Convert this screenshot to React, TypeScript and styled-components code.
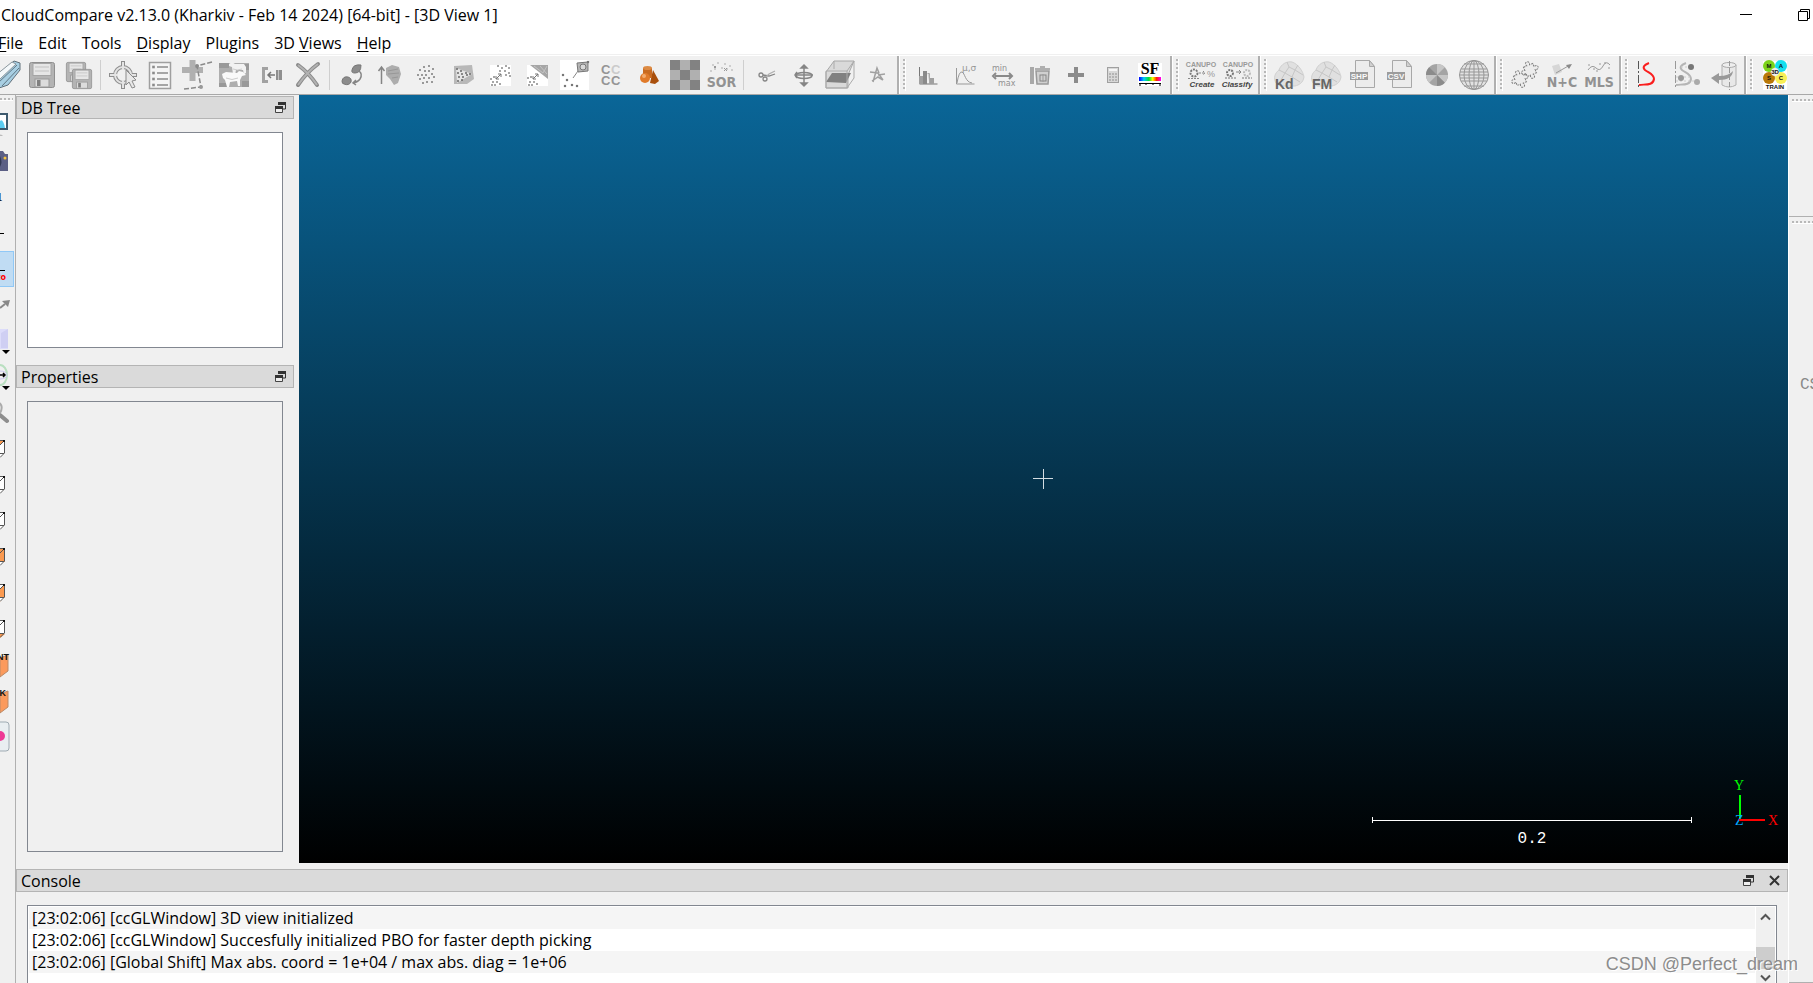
import React from 'react';
import styled, { createGlobalStyle } from 'styled-components';

const GlobalStyle = createGlobalStyle`
  * { box-sizing: border-box; }
  body { margin: 0; background: #f0f0f0; color: #000; font: 16px/20px "Open Sans", "Noto Sans", sans-serif; overflow: hidden; }
  button { font: inherit; color: inherit; background: none; border: 0; padding: 0; margin: 0; }
  ul { list-style: none; margin: 0; padding: 0; }
`;

/* ---------- window frame ---------- */

const Window = styled.div`
  position: relative;
  display: flex;
  flex-direction: column;
  height: 100vh;
  overflow: hidden;
`;

const TitleBar = styled.header`
  display: flex;
  justify-content: space-between;
  align-items: center;
  height: 29px;
  flex: none;
  padding: 0 3px 0 1px;
  background: #fff;
`;

const Title = styled.h1`
  margin: 0;
  font-size: 16px;
  line-height: 20px;
  font-weight: 400;
  white-space: nowrap;
`;

const WindowButtons = styled.div`
  display: flex;
  gap: 46px;
`;

const WindowButton = styled.button`
  display: flex;
  width: 12px;
  height: 12px;
`;

const MenuBar = styled.nav`
  display: flex;
  gap: 15px;
  height: 26px;
  flex: none;
  margin-left: -2px;
  padding-top: 4px;
  background: #fff;
  border-bottom: 1px solid #f0f0f0;
`;

const MenuButton = styled.button`
  height: 20px;
  line-height: 20px;
  white-space: nowrap;
  u { text-underline-offset: 2px; }
`;

/* ---------- top tool bar ---------- */

const ToolBar = styled.div`
  display: flex;
  flex: none;
  height: 40px;
  border-top: 1px solid #fff;
  border-bottom: 1px solid #a8a8a8;
  overflow: hidden;
`;

const ToolGroup = styled.div<{ $cut?: boolean }>`
  display: flex;
  flex: none;
  margin-left: ${(p) => (p.$cut ? '-14px' : '0')};
`;

const GroupEdge = styled.div`
  display: flex;
  align-items: center;
  flex: none;
  width: 14px;
  padding-left: 2px;
  &::before {
    content: '';
    align-self: stretch;
    width: 2px;
    margin-right: 3px;
    background: #b0b0b0;
    border-right: 1px solid #fff;
  }
`;

const VerticalGrip = styled.span`
  width: 3px;
  height: 32px;
  background: repeating-linear-gradient(to bottom, #b8b8b8 0 2px, transparent 2px 4px);
  border-right: 1px solid #fff;
`;

const HorizontalGrip = styled.div<{ $side?: 'left' | 'right' }>`
  height: 3px;
  flex: none;
  margin: ${(p) => (p.$side === 'right' ? '3px 0 0 3px' : '3px 2px 0 0')};
  background: repeating-linear-gradient(to right, #b8b8b8 0 2px, transparent 2px 4px);
  border-bottom: 1px solid #fff;
`;

const Separator = styled.span`
  display: flex;
  justify-content: center;
  width: 7px;
  padding: 4px 0;
  &::before { content: ''; width: 1px; background: #cfcfcf; }
`;

const ToolButton = styled.button`
  display: block;
  flex: none;
  width: 37px;
  height: 38px;
  svg { display: block; }
`;

/* ---------- body ---------- */

const Body = styled.div`
  display: flex;
  flex: 1;
  min-height: 0;
`;

const SideBar = styled.aside`
  display: flex;
  flex-direction: column;
  width: 16px;
  flex: none;
  overflow: hidden;
  border-right: 1px solid #b0b0b0;
`;

const SideButtons = styled.div`
  display: flex;
  flex-direction: column;
  padding-top: 6px;
`;

const SideButton = styled.button<{ $active?: boolean }>`
  display: block;
  height: 36px;
  width: ${(p) => (p.$active ? '14px' : '15px')};
  background: ${(p) => (p.$active ? '#c0dcf3' : 'none')};
  border: solid ${(p) => (p.$active ? '#90c8f6' : 'transparent')};
  border-width: 1px 1px 1px 0;
  svg { display: block; overflow: visible; }
`;

const Centre = styled.main`
  display: flex;
  flex-direction: column;
  flex: 1;
  min-width: 0;
`;

const Workspace = styled.div`
  display: flex;
  flex: 1;
  min-height: 0;
`;

const DockColumn = styled.div`
  display: flex;
  flex-direction: column;
  gap: 6px;
  width: 278px;
  flex: none;
  margin-right: 5px;
  padding-top: 1px;
`;

const Dock = styled.section<{ $height?: number }>`
  display: flex;
  flex-direction: column;
  min-height: 0;
  flex: ${(p) => (p.$height ? `0 0 ${p.$height}px` : '1')};
`;

const DockHeader = styled.div`
  display: flex;
  align-items: center;
  height: 23px;
  flex: none;
  padding: 0 7px 0 4px;
  background: #dadada;
  border: 1px solid #b4b4b4;
`;

const DockTitle = styled.h2`
  flex: 1;
  margin: 0;
  font-size: 16px;
  line-height: 20px;
  font-weight: 400;
`;

const HeaderButton = styled.button`
  display: flex;
  width: 11px;
  height: 11px;
  & + & { margin-left: 15px; }
`;

const DockPanel = styled.div<{ $fill: string }>`
  flex: 1;
  margin: 13px 11px 11px;
  border: 1px solid #828790;
  background: ${(p) => p.$fill};
`;

const Viewport = styled.div`
  position: relative;
  flex: 1;
  min-width: 0;
  background: linear-gradient(#0a6698, #000);
`;

const Crosshair = styled.svg`
  position: absolute;
  left: calc(50% - 11px);
  top: calc(50% - 11px);
`;

const ScaleBar = styled.div`
  position: absolute;
  right: 96px;
  bottom: 14px;
  width: 320px;
  color: #fff;
  text-align: center;
  font: 16px/20px "Liberation Mono", monospace;
  svg { display: block; width: 100%; margin-bottom: 6px; }
`;

const AxisTripod = styled.svg`
  position: absolute;
  right: 5px;
  bottom: 34px;
`;

/* ---------- console ---------- */

const Console = styled.section`
  flex: none;
  height: 114px;
  margin-top: 6px;
  overflow: hidden;
`;

const ConsoleBox = styled.div`
  display: flex;
  height: 84px;
  margin: 13px 11px 0;
  padding: 1px;
  background: #fff;
  border: 1px solid #828790;
  border-bottom: 0;
`;

const Log = styled.ul`
  flex: 1;
`;

const LogLine = styled.li`
  height: 22px;
  padding-left: 3px;
  line-height: 22px;
  white-space: nowrap;
  &:nth-child(odd) { background: #f5f5f5; }
`;

const ScrollBar = styled.div`
  display: flex;
  flex-direction: column;
  justify-content: space-between;
  width: 19px;
  margin-left: 1px;
  background: #f0f0f0;
`;

const ScrollButton = styled.button`
  display: flex;
  justify-content: center;
  align-items: center;
  height: 20px;
`;

const ScrollThumb = styled.div`
  height: 22px;
  margin-top: 21px;
  background: #cdcdcd;
`;

const RightBar = styled.aside`
  display: flex;
  flex-direction: column;
  width: 25px;
  flex: none;
  border-left: 1px solid #fff;
  overflow: hidden;
`;

const RightGroup = styled.div<{ $height?: number }>`
  flex: ${(p) => (p.$height ? `0 0 ${p.$height}px` : '1')};
  padding-top: 1px;
  border-bottom: 1px solid #b0b0b0;
`;

const PluginButton = styled.button`
  display: block;
  margin: 151px 0 0 11px;
  color: #8a8a8a;
  font: 16px/20px "Liberation Mono", monospace;
`;

const Watermark = styled.div`
  position: absolute;
  right: 15px;
  bottom: 7px;
  color: #8c8c8c;
  font: 18px/24px "Liberation Sans", Arial, sans-serif;
  text-shadow: 1px 1px 0 #fff;
`;

/* ---------- icons (drawn on a 37 x 38 button) ---------- */

const Dots = ({ at, r = 1, fill = '#777' }: { at: number[][]; r?: number; fill?: string }) => (
  <>
    {at.map(([x, y], i) => (
      <rect key={i} x={x - r} y={y - r} width={r * 2} height={r * 2} fill={fill} />
    ))}
  </>
);

const Floppy = ({ x, y, s }: { x: number; y: number; s: number }) => (
  <g transform={`translate(${x} ${y}) scale(${s})`}>
    <rect x="0.5" y="0.5" width="25" height="25" rx="2" fill="#b4b4b4" stroke="#8f8f8f" />
    <rect x="4" y="1.5" width="18" height="12" fill="#e6e6e6" stroke="#a4a4a4" />
    <path d="M6 5h14M6 9h14" stroke="#c2c2c2" />
    <rect x="6" y="17" width="14" height="8" fill="#dcdcdc" stroke="#999" />
    <rect x="8" y="18" width="3.5" height="6" fill="#808080" />
  </g>
);

const Rock = () => (
  <>
    <path d="M6 27c-3-5-1-10 3-13 2-6 8-9 13-8 6 2 11 9 12 15-1 6-5 8-9 9H10z" fill="#e0e0e0" stroke="#d0d0d0" />
    <path d="M9 14l6 3 4-6 6 3 3-5M15 17l-4 7M19 11l-2-5M25 14l-3 7 8 5M22 21l-7-4M25 14l8 5" fill="none" stroke="#c6c6c6" />
  </>
);

const FileSheet = ({ label }: { label: string }) => (
  <>
    <path d="M11.500 4.500h14l5 6v21h-19z" fill="#ececec" stroke="#a8a8a8" />
    <path d="M25.500 4.500v6h5z" fill="#d0d0d0" stroke="#a8a8a8" />
    <rect x="6" y="16" width="18" height="8" fill="#9c9c9c" />
    <text x="15" y="23" textAnchor="middle" fontSize="8" fontWeight="700" fontFamily="Liberation Sans" fill="#fafafa">{label}</text>
  </>
);

const JigsawPiece = ({ x, y }: { x: number; y: number }) => (
  <path
    transform={`translate(${x} ${y}) rotate(-22)`}
    d="M-5-5h3.500c-2.500-5 5.500-5 3 0H5v3.500c5-2.500 5 5.500 0 3V5H1.500c2.500 5-5.500 5-3 0H-5V1.500c-5 2.500-5-5.500 0-3z"
    fill="#ececec" stroke="#7d7d7d" strokeDasharray="2 1"
  />
);

const SerifFont = 'Liberation Serif';
const SansFont = 'Liberation Sans';
const NarrowFont = 'DejaVu Sans Condensed, Liberation Sans';

const icons: Record<string, React.ReactNode> = {
  open: (
    <>
      <path d="M8 22L28 5l6 2v7L22 29l-9 3z" fill="#a8cfe3" stroke="#61707a" />
      <path d="M10 19L26 6l4 2-17 16" fill="#f4f8fa" stroke="#8b979e" />
      <path d="M12 27L31 9M16 30l17-18" fill="none" stroke="#5f7683" />
    </>
  ),
  save: <Floppy x={6} y={6} s={1} />,
  saveAll: (<><Floppy x={6} y={6} s={0.77} /><Floppy x={12} y={13} s={0.77} /></>),
  pick: (
    <>
      <g fill="none" stroke="#8e8e8e" strokeWidth="4"><circle cx="19" cy="19" r="8" /><path d="M19 5v8M5 19h8M25 19h8M19 25v8" /></g>
      <g fill="none" stroke="#e4e4e4" strokeWidth="2"><circle cx="19" cy="19" r="8" /><path d="M19 6v7M6 19h7M25 19h7M19 25v7" /></g>
      <path d="M22 14l10 10-4 1 3 6-3 1-3-6-3 3z" fill="#e8e8e8" stroke="#8b8b8b" />
    </>
  ),
  list: (
    <>
      <rect x="8.500" y="6.500" width="21" height="26" fill="#f4f4f4" stroke="#9f9f9f" strokeWidth="1.500" />
      <path d="M16 11h11M16 17h11M16 23h11M16 29h11" stroke="#8a8a8a" strokeWidth="1.500" />
      <Dots r={1.3} fill="#8a8a8a" at={[[12.5, 11], [12.5, 17], [12.5, 23], [12.5, 29]]} />
    </>
  ),
  addPoint: (
    <>
      <path d="M4 14h21M14.500 4v21" stroke="#b0b0b0" strokeWidth="6" />
      <path d="M34 6L19 10l4 21-17 2" fill="none" stroke="#8a8a8a" strokeWidth="1.500" strokeDasharray="5 2" />
      <circle cx="19" cy="10" r="2" fill="#8a8a8a" /><circle cx="23" cy="31" r="2" fill="#999" />
    </>
  ),
  clone: (
    <>
      <rect x="4" y="7" width="30" height="24" fill="#aeaeae" />
      <path d="M4 7h10v5H4zM26 8h8v6h-8zM4 27h9v4H4zM27 25h7v6h-7z" fill="#999" />
      <path d="M14 8l3-2 3 2h9l2 3v6l-2 1-1-4h-7l-1 5-2-1-1-7-3-1z" fill="#f2f2f2" />
      <path d="M7 18l4-2 11 1 2-2 4 1 3 3-4 1-2 4v6h-2l-1-5-7 1-1 5h-2l-2-7-2-2z" fill="#fafafa" />
      <path d="M11 22q6 3 12 0M18 13q4 2 9 0" stroke="#cdcdcd" fill="none" />
    </>
  ),
  merge: (
    <>
      <path d="M16 12.500h-4.500v13H16" fill="none" stroke="#a2a2a2" strokeWidth="3" />
      <path d="M23 19h-7m3-3l-3 3 3 3" fill="none" stroke="#777" strokeWidth="1.500" />
      <rect x="24" y="14" width="6" height="10" fill="#8f8f8f" /><path d="M26.500 14v10" stroke="#c4c4c4" />
    </>
  ),
  remove: (<><path d="M9 9q11 8 19 20M29 8Q18 16 9 29" fill="none" stroke="#8a8a8a" strokeWidth="4" strokeLinecap="round" /><path d="M9 9q11 8 19 20M29 8Q18 16 9 29" fill="none" stroke="#b2b2b2" strokeWidth="2" /></>),
  register: (
    <>
      <path d="M19 14q1-6 9-5 0 8-6 8-4 0-3-3zM9 25q1-5 6-4 4 1 3 5-2 4-7 2-2 0-2-3z" fill="#8c8c8c" stroke="#777" />
      <path d="M26 15q4 3 1 8-2 3-7 4M23 24l-3 3 3 2" fill="none" stroke="#858585" strokeWidth="1.500" />
    </>
  ),
  align: (
    <>
      <path d="M11.500 28V12M8.500 15l3-4 3 4" fill="none" stroke="#858585" strokeWidth="1.500" />
      <path d="M16 12l6-3 7 2 2 7-3 9-4 2-4-6-4-4z" fill="#adadad" />
      <path d="M18 15l10-2M18 18l11-1M22 22l6-1" stroke="#989898" />
    </>
  ),
  subsample: <Dots r={0.9} fill="#858585" at={[[17, 11], [22, 10], [26, 13], [13, 14], [18, 15], [22, 15], [11, 19], [15, 19], [19, 19], [25, 18], [27, 21], [13, 23], [17, 22], [22, 22], [16, 27], [20, 26], [25, 26]]} />,
  sample: (
    <>
      <path d="M10 10l18-1 2 14-7 5H10z" fill="#b8b8b8" /><path d="M12 12l16 6-15 9z" fill="#e5e5e5" />
      <Dots r={0.8} fill="#555" at={[[13, 13], [17, 15], [14, 17], [18, 18], [22, 17], [15, 21], [19, 21], [23, 19], [14, 25], [18, 24], [26, 18]]} />
    </>
  ),
  cloudDist: (
    <>
      <rect x="9" y="9" width="21" height="21" fill="#fff" />
      <Dots r={0.8} at={[[17, 10], [21, 12], [25, 10], [28, 12], [19, 15], [24, 15], [28, 17], [25, 19], [29, 20], [10, 23], [13, 21], [12, 26], [16, 26], [11, 29], [19, 28], [14, 29]]} />
      <path d="M15 23l5-5m-3 0h3v3m-5-1v3h3" fill="none" stroke="#777" />
    </>
  ),
  meshDist: (
    <>
      <rect x="9" y="9" width="21" height="21" fill="#fff" />
      <path d="M12 9h18v14z" fill="#a6a6a6" /><path d="M16 10l9 7 4-7M22 10l7 8" fill="none" stroke="#c4c4c4" />
      <Dots r={0.8} at={[[10, 22], [13, 21], [12, 26], [16, 26], [11, 29], [19, 28], [14, 29]]} />
      <path d="M15 23l5-5m-3 0h3v3m-5-1v3h3" fill="none" stroke="#777" />
    </>
  ),
  primitiveDist: (
    <>
      <rect x="5" y="4" width="29" height="30" fill="#fff" />
      <path d="M22 7l11-1v9l-10 1z" fill="#b6b6b6" stroke="#777" /><circle cx="28" cy="11" r="3" fill="#d8d8d8" stroke="#777" />
      <path d="M23 15l-5 7" stroke="#888" /><Dots r={1.1} at={[[8, 19], [12, 24], [10, 30], [17, 29], [22, 30], [33, 6]]} />
    </>
  ),
  labels: (
    <g fontSize="13" fontWeight="700" fontFamily={SansFont} fill="#959595">
      <text x="9" y="18">C</text><text x="19" y="18" fill="#cbcbcb">C</text><text x="9" y="29">C</text><text x="19" y="29">C</text>
    </g>
  ),
  primitives: (
    <>
      <path d="M24 14l6 11-4 3-5-1z" fill="#a94f0c" /><path d="M14 12v10h9V12z" fill="#c86a20" /><ellipse cx="18.500" cy="12" rx="4.500" ry="2" fill="#dc8a43" />
      <circle cx="16" cy="22" r="5" fill="#e07a2a" /><circle cx="15" cy="20" r="2" fill="#f3ac6f" />
    </>
  ),
  checker: (
    <>
      <rect x="4" y="4" width="30" height="30" fill="#b0b0b0" />
      <path d="M4 4h10v10H4zM24 4h10v10H24zM14 14h10v10H14zM4 24h10v10H4zM24 24h10v10H24z" fill="#828282" />
    </>
  ),
  sor: (
    <>
      <Dots r={0.8} fill="#bbb" at={[[10, 9], [15, 7], [22, 8], [27, 10], [12, 13], [19, 12], [24, 13], [8, 15], [29, 14]]} />
      <path d="M11 10l2 2m0-2l-2 2M21 12l3 3m0-3l-3 3" stroke="#999" />
      <text x="18.500" y="31" textAnchor="middle" fontSize="14" fontWeight="700" fontFamily={NarrowFont} fill="#929292">SOR</text>
    </>
  ),
  cut: (<g fill="none" stroke="#858585" strokeWidth="1.300"><circle cx="14" cy="19" r="2" /><circle cx="18" cy="23" r="2" /><path d="M16 19l6 1 6-2" /><path d="M19 21l3-3 6-3" stroke="#b0b0b0" /></g>),
  rotate: (
    <g stroke="#858585" fill="none" strokeWidth="1.500">
      <path d="M20 11v17M13 19h16" /><ellipse cx="20" cy="19.500" rx="8" ry="3" /><path d="M17 12l3-3 3 3zM17 27l3 3 3-3zM13 16l-2 3 2 3" fill="#858585" />
    </g>
  ),
  section: (
    <>
      <path d="M5 16l8-11h20l-6 14v13H5z" fill="#d9d9d9" stroke="#a8a8a8" />
      <path d="M5 26l6-9h19l-5 10z" fill="#808080" />
      <path d="M5 15h21v17H5zM26 15l7-10v17l-7 10M13 5v8" fill="none" stroke="#ababab" />
    </>
  ),
  trace: <path d="M12 16l8 1 5 7M15 26l4-14 2 5M14 25l6-4 5 3M20 19l7-1" fill="none" stroke="#a0a0a0" strokeWidth="1.500" />,
  histogram: (
    <>
      <path d="M10.500 11v17h18" fill="none" stroke="#777" /><path d="M10 20h4v8h-4zM20 22h5v6h-5z" fill="#a0a0a0" />
      <path d="M14 15h4v13h-4z" fill="#8a8a8a" /><path d="M18.500 17.500h2v10" fill="#d0d0d0" stroke="#aaa" />
    </>
  ),
  gaussian: (
    <>
      <path d="M10.500 12v16h18" fill="none" stroke="#999" /><path d="M11 27q2-12 5-11c3 1 3 10 10 11" fill="none" stroke="#999" />
      <text x="16" y="15" fontSize="9" fontFamily="DejaVu Sans" fill="#969696">μ,σ</text>
    </>
  ),
  minMax: (
    <>
      <g fontSize="8" fontFamily="DejaVu Sans" fill="#909090"><text x="9" y="15">min</text><text x="15" y="30">max</text></g>
      <path d="M12 20h8M20 20h9M13 17l-3 3 3 3M26 17l3 3-3 3" fill="none" stroke="#8a8a8a" strokeWidth="2" />
    </>
  ),
  trash: (
    <>
      <path d="M12 11v17" stroke="#a8a8a8" strokeWidth="4" /><path d="M16 15h13l-1 13H17zM15 13h15M20 11h5" fill="#d0d0d0" stroke="#999" strokeWidth="1.500" />
      <rect x="20" y="19" width="6" height="6" fill="none" stroke="#858585" /><path d="M23 18v8" stroke="#999" />
    </>
  ),
  plus: <path d="M11 19h16M19 11v16" stroke="#8b8b8b" strokeWidth="4" />,
  calculator: (
    <>
      <rect x="13.500" y="11.500" width="11" height="15" fill="#d8d8d8" stroke="#a0a0a0" /><rect x="15" y="13" width="8" height="2" fill="#f6f6f6" />
      <path d="M15 18h8M15 21h8M15 24h8" stroke="#909090" strokeDasharray="2 1" />
    </>
  ),
  scalarField: (
    <>
      <defs><linearGradient id="rainbow"><stop stopColor="#00f" /><stop offset=".22" stopColor="#0cf" /><stop offset=".45" stopColor="#0d3" /><stop offset=".62" stopColor="#ff0" /><stop offset=".8" stopColor="#f20" /><stop offset="1" stopColor="#f0f" /></linearGradient></defs>
      <rect x="7" y="7" width="24" height="23" fill="#fff" />
      <text x="19" y="18" textAnchor="middle" fontSize="16" fontWeight="700" fontFamily={SerifFont} fill="#000">SF</text>
      <rect x="8" y="21" width="22" height="4" fill="url(#rainbow)" /><path d="M8 27.500h22M9 27v3M15 27v2M22 27v2M29 27v3" stroke="#000" fill="none" />
    </>
  ),
  canupoCreate: (
    <>
      <g fontFamily={SansFont} fontWeight="700" textAnchor="middle"><text x="19" y="11" fontSize="7" fill="#999">CANUPO</text><text x="20" y="31" fontSize="8" fontStyle="italic" fill="#444">Create</text></g>
      <circle cx="12" cy="17" r="3.500" fill="none" stroke="#777" strokeWidth="2" strokeDasharray="2 1" /><path d="M17 17h6m-2-2l2 2-2 2M6 22.500h12" fill="none" stroke="#888" strokeDasharray="2 1" />
      <text x="25" y="21" fontSize="9" fontFamily={SansFont} fill="#999">%</text>
    </>
  ),
  canupoClassify: (
    <>
      <g fontFamily={SansFont} fontWeight="700" textAnchor="middle"><text x="19" y="11" fontSize="7" fill="#999">CANUPO</text><text x="18" y="31" fontSize="8" fontStyle="italic" fill="#444">Classify</text></g>
      <g fill="none" strokeWidth="2" strokeDasharray="2 1"><circle cx="11" cy="17" r="3" stroke="#777" /><circle cx="28" cy="17" r="3" stroke="#bbb" /></g>
      <path d="M17 16h5m-2-2l2 2-2 2" fill="none" stroke="#888" /><path d="M6 22h12M23 22h10" stroke="#777" strokeDasharray="2 1" />
    </>
  ),
  kd: (<><Rock /><text x="5" y="33" fontSize="14" fontWeight="700" fontFamily={SansFont} fill="#666">Kd</text></>),
  fm: (<><Rock /><text x="5" y="33" fontSize="14" fontWeight="700" fontFamily={SansFont} fill="#666">FM</text></>),
  shp: <FileSheet label="SHP" />,
  csv: <FileSheet label="CSV" />,
  pie: (
    <>
      <circle cx="19" cy="19" r="11" fill="#a4a4a4" />
      <path d="M19 19V8a11 11 0 0 1 7.800 3.200zM19 19l11 0a11 11 0 0 1-3.200 7.800zM19 19l-7.800 7.800A11 11 0 0 1 8 19z" fill="#c6c6c6" />
      <path d="M19 19v11a11 11 0 0 0 7.800-3.200zM19 19H8a11 11 0 0 1 3.200-7.800z" fill="#8b8b8b" />
    </>
  ),
  globe: (
    <g fill="none" stroke="#979797">
      <circle cx="19" cy="19" r="14.500" fill="#e2e2e2" /><ellipse cx="19" cy="19" rx="5" ry="14.500" /><ellipse cx="19" cy="19" rx="10" ry="14.500" />
      <path d="M19 4v30M4 19h30M6 13h26M9 8h20M6 25h26M9 30h20M5 16h28M5 22h28" />
    </g>
  ),
  puzzle: (<><JigsawPiece x={14} y={23} /><JigsawPiece x={24} y={14} /></>),
  normals: (
    <>
      <path d="M9 10l7-2 3 8-7 3z" fill="#d6d6d6" /><path d="M13 17L27 9" stroke="#999" /><path d="M29 8l-6 1 3 4z" fill="#8a8a8a" />
      <text x="19" y="31" textAnchor="middle" fontSize="14" fontWeight="700" fontFamily={NarrowFont} fill="#929292">N+C</text>
    </>
  ),
  mls: (
    <>
      <path d="M8 14q4-6 8-2t7-2 7-1" fill="none" stroke="#9a9a9a" /><Dots r={0.7} fill="#999" at={[[9, 9], [14, 13], [20, 8], [25, 7], [29, 12], [17, 15]]} />
      <text x="19" y="31" textAnchor="middle" fontSize="14" fontWeight="700" fontFamily={NarrowFont} fill="#929292">MLS</text>
    </>
  ),
  profile: (<><path d="M7.500 5v28" stroke="#555" strokeDasharray="8 2 2 2" /><path d="M18 7q-8 3-4 7c4 3 9 4 9 9-1 7-9 5-15 6" fill="none" stroke="#fa1e1e" strokeWidth="2" /></>),
  profilePoints: (
    <>
      <path d="M7.500 5v28" stroke="#999" strokeDasharray="8 2 2 2" /><path d="M18 7q-8 3-4 7c4 3 9 4 9 9-1 7-9 5-15 6" fill="none" stroke="#b5b5b5" strokeWidth="2" />
      <path d="M13 11h10M8 21h14M8 25h20" stroke="#ccc" strokeDasharray="2 2" /><circle cx="23" cy="11" r="3" fill="#777" /><circle cx="13" cy="22" r="3" fill="#999" /><circle cx="29" cy="26" r="3" fill="#aaa" />
    </>
  ),
  unroll: (
    <>
      <path d="M17 9v20q7 4 14 0V9" fill="#e8e8e8" stroke="#b0b0b0" /><ellipse cx="24" cy="9" rx="7" ry="2.500" fill="#eee" stroke="#aaa" /><path d="M24.500 5v29" stroke="#999" strokeDasharray="5 2" />
      <path d="M6 22l8-5v3q10 0 14-5-1 9-14 9v4z" fill="#999" />
    </>
  ),
  masc: (
    <>
      <rect x="7" y="5" width="24" height="29" fill="#fff" />
      <circle cx="13" cy="10" r="6" fill="#7cd31a" /><circle cx="25" cy="10" r="6" fill="#12dfee" /><circle cx="13" cy="22" r="6" fill="#b97808" /><circle cx="25" cy="22" r="6" fill="#f8ef55" /><circle cx="19" cy="16" r="4" fill="#eee" />
      <g fontSize="6" fontWeight="700" fontFamily={SansFont} textAnchor="middle" fill="#111"><text x="13" y="12">M</text><text x="25" y="12">A</text><text x="19" y="18">3D</text><text x="13" y="24">S</text><text x="25" y="24">C</text><text x="19" y="33">TRAIN</text></g>
    </>
  ),
};

const Tool = ({ name }: { name: string }) => (
  <ToolButton aria-label={name}>
    <svg width="37" height="38" viewBox="0 0 37 38" aria-hidden="true">{icons[name]}</svg>
  </ToolButton>
);

const mainTools = [
  ['open', 'save', 'saveAll'],
  ['pick', 'list', 'addPoint', 'clone', 'merge', 'remove'],
  ['register', 'align', 'subsample', 'sample', 'cloudDist', 'meshDist', 'primitiveDist', 'labels', 'primitives', 'checker', 'sor'],
  ['cut', 'rotate', 'section', 'trace'],
];

const pluginTools = [
  ['histogram', 'gaussian', 'minMax', 'trash', 'plus', 'calculator', 'scalarField'],
  ['canupoCreate', 'canupoClassify'],
  ['kd', 'fm', 'shp', 'csv', 'pie', 'globe'],
  ['puzzle', 'normals', 'mls'],
  ['profile', 'profilePoints', 'unroll'],
  ['masc'],
];

/* ---------- left bar drawings (15 x 34, right part of each icon) ---------- */

const Cube = ({ top, back, side, bottom }: { top?: boolean; back?: boolean; side?: boolean; bottom?: boolean }) => (
  <>
    <path d="M0 9h5v13H0z" fill={back ? '#fb9a50' : '#fff'} />
    <path d="M0 8h5L0 13z" fill={top ? '#fb9a50' : '#fff'} />
    <path d="M5 8v13l-5 5V13z" fill={side ? '#fb9a50' : 'none'} />
    <path d="M0 22h5l-5 4z" fill={bottom ? '#fb9a50' : '#fff'} />
    <path d="M0 8.500h4.500V21L0 25.500M4.500 8.500L0 13M0 21.500h4" fill="none" stroke="#555" />
    <rect x="3" y="8" width="2" height="2" fill="#111" />
  </>
);

const OrangeBox = ({ label, end }: { label: string; end: number }) => (
  <>
    <path d="M0 10l8-3v16l-8 6z" fill="#fb9a5c" stroke="#b98a68" />
    <text x={end} y="12" textAnchor="end" fontSize="9" fontWeight="700" fontFamily={SansFont} fill="#111">{label}</text>
  </>
);

const Drop = () => <path d="M2 26h8l-4 4z" fill="#000" />;

const sideTools: { name: string; active?: boolean; art: React.ReactNode }[] = [
  { name: 'Display settings', art: (<><path d="M-4 6H7v15H-4z" fill="#fff" stroke="#3d5a6e" strokeWidth="2" /><path d="M0 13q3-3 5 7H0z" fill="#5bcdf2" /><path d="M-2 28q3-3 5 0z" fill="#bbb" /></>) },
  { name: 'Camera settings', art: (<><path d="M0 7h3l2 3h3v17H0z" fill="#5b5f85" /><path d="M0 12q3 6 0 11z" fill="#333a55" /><circle cx="5" cy="14" r="1.500" fill="#f5c542" /></>) },
  { name: 'Zoom 1:1', art: (<text x="-4" y="21" fontSize="13" fontWeight="700" fontFamily={SerifFont}>1</text>) },
  { name: 'Level', art: <path d="M0 17.500h4" stroke="#000" /> },
  { name: 'Auto-pick rotation centre', active: true, art: (<><path d="M0 18.500h5" stroke="#000" /><text x="6" y="28" textAnchor="end" fontSize="8" fontWeight="700" fontFamily="DejaVu Sans" fill="#f00">to</text></>) },
  { name: 'Point picking', art: (<><path d="M0 20l5-4" stroke="#888" strokeWidth="2" /><path d="M2 13l8-1-2 7z" fill="#888" /></>) },
  { name: 'Perspective', art: (<><path d="M0 5h8v20H0z" fill="#dcdcfa" /><path d="M8 5L1 9v15h7z" fill="#cfcff3" /><Drop /></>) },
  { name: 'Pivot', art: (<><ellipse cx="0" cy="15" rx="7" ry="10" fill="none" stroke="#b9dfc0" strokeWidth="2" /><ellipse cx="0" cy="15" rx="7" ry="4" fill="none" stroke="#c9c9ef" /><path d="M0 15h5m-2-2l2 2-2 2" fill="none" stroke="#000" strokeWidth="1.500" /><Drop /></>) },
  { name: 'Zoom', art: (<><path d="M-5 5q10 3 5 12" fill="none" stroke="#aaa" strokeWidth="2" /><path d="M0 19l7 6" stroke="#8d8d8d" strokeWidth="4" strokeLinecap="round" /></>) },
  { name: 'Top view', art: <Cube top /> },
  { name: 'Front view', art: <Cube /> },
  { name: 'Left view', art: <Cube /> },
  { name: 'Back view', art: <Cube back top /> },
  { name: 'Right view', art: <Cube side /> },
  { name: 'Bottom view', art: <Cube bottom /> },
  { name: 'Front isometric view', art: <OrangeBox label="NT" end={9} /> },
  { name: 'Back isometric view', art: <OrangeBox label="K" end={6} /> },
  { name: 'Stereo', art: (<><rect x="-16" y="2" width="25" height="29" rx="3" fill="#e9eef1" stroke="#9fabb3" /><circle cx="0" cy="16" r="5" fill="#ee3a95" /></>) },
];

const FloatIcon = () => (
  <svg width="11" height="11" aria-hidden="true">
    <path d="M3 1h7.500v6H8" fill="none" stroke="#333" /><path d="M3 0h8v3H3z" fill="#333" />
    <path d="M.5 4.500h7v6h-7z" fill="#eee" stroke="#444" /><path d="M0 4h8v3H0z" fill="#333" />
  </svg>
);

const menus: [string, string, string][] = [
  ['', 'F', 'ile'], ['Edit', '', ''], ['Tools', '', ''], ['', 'D', 'isplay'], ['Plugins', '', ''], ['3D ', 'V', 'iews'], ['', 'H', 'elp'],
];

const logLines = [
  '[23:02:06] [ccGLWindow] 3D view initialized',
  '[23:02:06] [ccGLWindow] Succesfully initialized PBO for faster depth picking',
  '[23:02:06] [Global Shift] Max abs. coord = 1e+04 / max abs. diag = 1e+06',
];

export default function App() {
  return (
    <Window>
      <GlobalStyle />
      <TitleBar>
        <Title>CloudCompare v2.13.0 (Kharkiv - Feb 14 2024) [64-bit] - [3D View 1]</Title>
        <WindowButtons>
          <WindowButton aria-label="Minimize"><svg width="12" height="12"><path d="M0 5.500h12" stroke="#000" /></svg></WindowButton>
          <WindowButton aria-label="Restore"><svg width="12" height="12"><path d="M.5 2.500h9v9h-9zM2.500 2V.5h9v9H10" fill="none" stroke="#000" /></svg></WindowButton>
        </WindowButtons>
      </TitleBar>
      <MenuBar>
        {menus.map(([a, key, b]) => (
          <MenuButton key={a + key + b}>{a}{key && <u>{key}</u>}{b}</MenuButton>
        ))}
      </MenuBar>
      <ToolBar>
        <ToolGroup $cut>
          {mainTools.map((group, i) => (
            <React.Fragment key={i}>
              {i > 0 && <Separator />}
              {group.map((name) => <Tool key={name} name={name} />)}
            </React.Fragment>
          ))}
        </ToolGroup>
        {pluginTools.map((group) => (
          <ToolGroup key={group[0]}>
            <GroupEdge><VerticalGrip /></GroupEdge>
            {group.map((name) => <Tool key={name} name={name} />)}
          </ToolGroup>
        ))}
      </ToolBar>
      <Body>
        <SideBar>
          <HorizontalGrip />
          <SideButtons>
            {sideTools.map((t) => (
              <SideButton key={t.name} aria-label={t.name} $active={t.active}>
                <svg width="15" height="34" aria-hidden="true">{t.art}</svg>
              </SideButton>
            ))}
          </SideButtons>
        </SideBar>
        <Centre>
          <Workspace>
            <DockColumn>
              <Dock $height={263}>
                <DockHeader><DockTitle>DB Tree</DockTitle><HeaderButton aria-label="Float DB Tree"><FloatIcon /></HeaderButton></DockHeader>
                <DockPanel $fill="#fff" />
              </Dock>
              <Dock>
                <DockHeader><DockTitle>Properties</DockTitle><HeaderButton aria-label="Float Properties"><FloatIcon /></HeaderButton></DockHeader>
                <DockPanel $fill="#f0f0f0" />
              </Dock>
            </DockColumn>
            <Viewport>
              <Crosshair width="21" height="21"><path d="M0 10.500h20M10.500 1v20" stroke="#d2dce2" /></Crosshair>
              <ScaleBar>
                <svg height="6"><path d="M0 3.500h320M.5 0v6M319.500 0v6" stroke="#fff" /></svg>
                0.2
              </ScaleBar>
              <AxisTripod width="50" height="52" fontFamily={SerifFont} fontSize="14">
                <path d="M7 18v26" stroke="#0f0" strokeWidth="2" />
                <text x="1" y="13" fill="#0f0">Y</text>
                <text x="2" y="48" fill="#00a8ff">Z</text>
                <path d="M6 43h26" stroke="#f00" strokeWidth="2" />
                <text x="35" y="48" fill="#f00">X</text>
              </AxisTripod>
            </Viewport>
          </Workspace>
          <Console>
            <DockHeader>
              <DockTitle>Console</DockTitle>
              <HeaderButton aria-label="Float Console"><FloatIcon /></HeaderButton>
              <HeaderButton aria-label="Close Console"><svg width="11" height="11"><path d="M1 1l9 9M10 1l-9 9" stroke="#333" strokeWidth="2" /></svg></HeaderButton>
            </DockHeader>
            <ConsoleBox>
              <Log>{logLines.map((l) => <LogLine key={l}>{l}</LogLine>)}</Log>
              <ScrollBar>
                <ScrollButton aria-label="Scroll up"><svg width="11" height="8"><path d="M1 6.500l4.500-4.500L10 6.500" fill="none" stroke="#555" strokeWidth="2" /></svg></ScrollButton>
                <ScrollThumb />
                <ScrollButton aria-label="Scroll down"><svg width="11" height="8"><path d="M1 1.500L5.500 6 10 1.500" fill="none" stroke="#555" strokeWidth="2" /></svg></ScrollButton>
              </ScrollBar>
            </ConsoleBox>
          </Console>
        </Centre>
        <RightBar>
          <RightGroup $height={122}><HorizontalGrip $side="right" /></RightGroup>
          <RightGroup><HorizontalGrip $side="right" /><PluginButton>CS</PluginButton></RightGroup>
        </RightBar>
      </Body>
      <Watermark>CSDN @Perfect_dream</Watermark>
    </Window>
  );
}
